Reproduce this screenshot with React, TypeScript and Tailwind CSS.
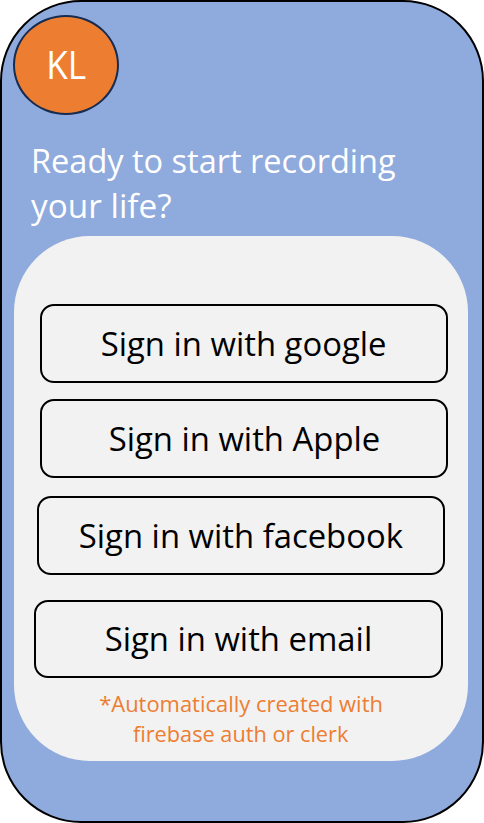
const options = [
  { label: "Sign in with google", box: "ml-[26px] w-[408px] h-[79px]" },
  { label: "Sign in with Apple", box: "ml-[26px] w-[408px] h-[79px] mt-4" },
  { label: "Sign in with facebook", box: "ml-[23px] w-[408px] h-[79px] mt-[18px]" },
  { label: "Sign in with email", box: "ml-5 w-[409px] h-[78px] mt-[25px] pb-0.5" },
];

export default function App() {
  return (
    <main className="flex h-[823px] w-[484px] flex-col overflow-hidden rounded-[81px] border-2 border-black bg-[#8faadc] font-['Open_Sans',sans-serif]">
      <div className="mt-[13px] ml-[11px] flex h-[100px] w-[106px] shrink-0 items-center justify-center rounded-[50%] border-2 border-[#172c51] bg-[#ed7d31] text-white">
        <span className="scale-x-[0.94] text-[37.5px] leading-[50px]">KL</span>
      </div>
      <h1 className="mt-[23px] ml-[29px] h-[98px] shrink-0 text-[33px] leading-[45px] whitespace-nowrap text-white">
        <span className="block w-fit origin-left scale-x-[0.985]">Ready to start recording</span>
        <span className="block w-fit origin-left scale-x-[1.01]">your life?</span>
      </h1>
      <section className="ml-3 flex h-[525px] w-[454px] shrink-0 flex-col rounded-[76px] bg-[#f2f2f2] pt-[68px]">
        {options.map((o) => (
          <button
            key={o.label}
            className={`flex shrink-0 items-center justify-center rounded-[14px] border-2 border-black text-[33px] leading-[45px] whitespace-nowrap text-black ${o.box}`}
          >
            <span className="scale-x-[0.995]">{o.label}</span>
          </button>
        ))}
        <p className="mt-[11px] flex flex-col items-center text-[21.5px] leading-[30px] whitespace-nowrap text-[#ed7d31]">
          <span className="scale-x-[1.02]">*Automatically created with</span>
          <span className="scale-x-[1.01]">firebase auth or clerk</span>
        </p>
      </section>
    </main>
  );
}
